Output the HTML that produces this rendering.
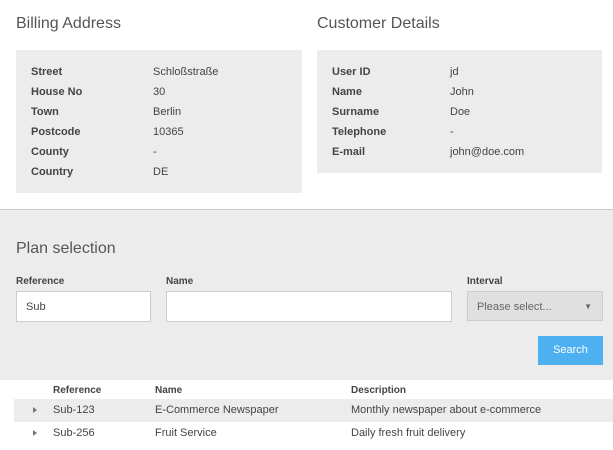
<!DOCTYPE html>
<html><head><style>
*{margin:0;padding:0;box-sizing:border-box}
body{width:613px;height:450px;background:#fff;font-family:"Liberation Sans",sans-serif;color:#444;position:relative;overflow:hidden}
.a{position:absolute;white-space:nowrap}
h2{position:absolute;font-weight:normal;font-size:16px;color:#555}
.box{position:absolute;background:#ececec}
.l{position:absolute;font-size:11px;font-weight:bold;color:#444}
.v{position:absolute;font-size:11px;color:#444}
.in{position:absolute;background:#fff;border:1px solid #ccc;font-size:11px;padding-left:9px;line-height:29px;color:#444}
.ar{position:absolute;width:0;height:0;border-left:4px solid #777;border-top:3px solid transparent;border-bottom:3px solid transparent}
</style></head><body>
<h2 style="left:16px;top:15px">Billing Address</h2>
<h2 style="left:317px;top:15px">Customer Details</h2>
<div class="box" style="left:16px;top:50px;width:286px;height:143px"></div>
<div class="box" style="left:317px;top:50px;width:285px;height:123px"></div>
<div class="l" style="left:31px;top:62px;line-height:20px">Street<br>House No<br>Town<br>Postcode<br>County<br>Country</div>
<div class="v" style="left:153px;top:62px;line-height:20px">Schloßstraße<br>30<br>Berlin<br>10365<br>-<br>DE</div>
<div class="l" style="left:332px;top:62px;line-height:20px">User ID<br>Name<br>Surname<br>Telephone<br>E-mail</div>
<div class="v" style="left:450px;top:62px;line-height:20px">jd<br>John<br>Doe<br>-<br>john@doe.com</div>
<div class="box" style="left:0;top:209px;width:613px;height:171px;border-top:1px solid #c8c8c8"></div>
<h2 style="left:16px;top:240px">Plan selection</h2>
<div class="l" style="left:16px;top:276px;font-size:10px">Reference</div>
<div class="l" style="left:166px;top:276px;font-size:10px">Name</div>
<div class="l" style="left:467px;top:276px;font-size:10px">Interval</div>
<div class="in" style="left:16px;top:291px;width:135px;height:31px;line-height:31px">Sub</div>
<div class="in" style="left:166px;top:291px;width:286px;height:31px"></div>
<div class="in" style="left:467px;top:291px;width:136px;height:30px;line-height:30px;background:#e0e0e0;color:#666">Please select...<span style="position:absolute;right:10px;top:0;font-size:8px">▼</span></div>
<div class="a" style="left:538px;top:336px;width:65px;height:29px;background:#4db0f0;color:#fff;font-size:11px;text-align:center;line-height:29px">Search</div>
<div class="l" style="left:53px;top:385px;font-size:10px">Reference</div>
<div class="l" style="left:155px;top:385px;font-size:10px">Name</div>
<div class="l" style="left:351px;top:385px;font-size:10px">Description</div>
<div class="box" style="left:14px;top:399px;width:599px;height:23px"></div>
<div class="ar" style="left:33px;top:407px"></div>
<div class="v" style="left:53px;top:404px">Sub-123</div>
<div class="v" style="left:155px;top:404px">E-Commerce Newspaper</div>
<div class="v" style="left:351px;top:404px">Monthly newspaper about e-commerce</div>
<div class="ar" style="left:33px;top:430px"></div>
<div class="v" style="left:53px;top:427px">Sub-256</div>
<div class="v" style="left:155px;top:427px">Fruit Service</div>
<div class="v" style="left:351px;top:427px">Daily fresh fruit delivery</div>
</body></html>
